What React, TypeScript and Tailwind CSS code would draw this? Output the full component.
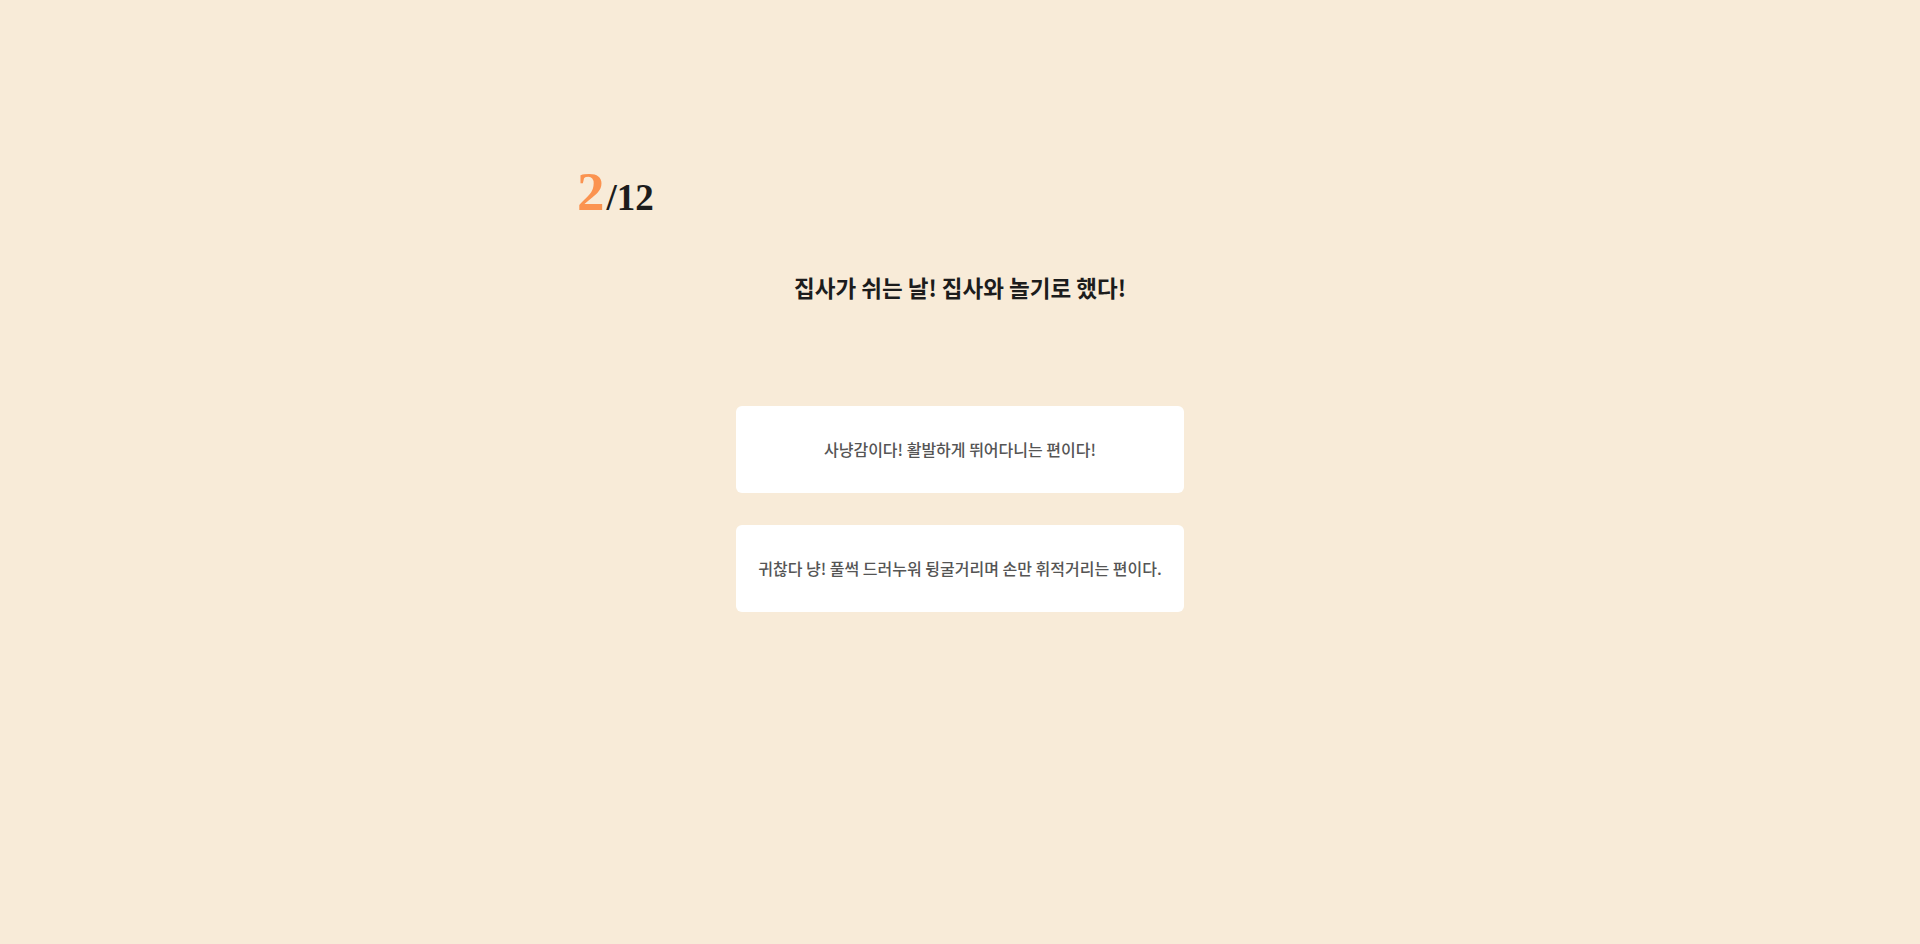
import React from "react";

export default function App() {
  const options = [
    "사냥감이다! 활발하게 뛰어다니는 편이다!",
    "귀찮다 냥! 풀썩 드러누워 뒹굴거리며 손만 휘적거리는 편이다.",
  ];
  return (
    <div className="min-h-[944px] w-full bg-[#f8ebd8]" style={{ fontFamily: '"Noto Sans CJK KR", "Noto Sans", sans-serif' }}>
      <div className="mx-auto w-[800px] pt-[164px]">
        <div className="pl-[17px] flex items-baseline leading-none" style={{ fontFamily: '"Liberation Serif", "DejaVu Serif", serif' }}>
          <span className="text-[55px] font-bold text-[#fb9350]">2</span>
          <span className="ml-[2px] text-[37px] font-bold text-[#1c1c1c]">/12</span>
        </div>
        <h1 className="mt-[52px] text-center text-[22.5px] font-bold text-[#1c1c1c]">집사가 쉬는 날! 집사와 놀기로 했다!</h1>
        <div className="mt-[101px] flex flex-col items-center gap-8">
          {options.map((o) => (
            <button key={o} className="flex h-[87px] w-[448px] items-center justify-center rounded-md bg-white text-[16px] font-medium text-[#555555]">
              {o}
            </button>
          ))}
        </div>
      </div>
    </div>
  );
}
